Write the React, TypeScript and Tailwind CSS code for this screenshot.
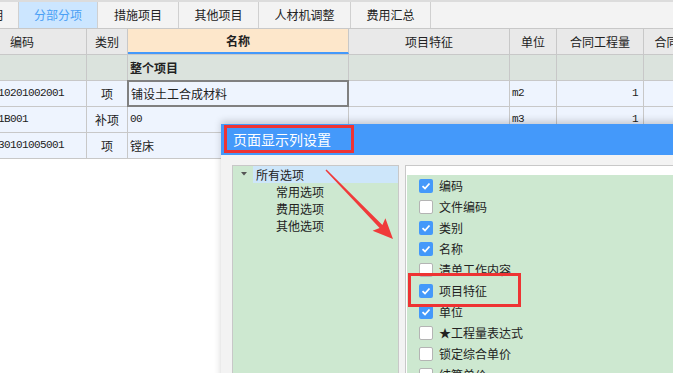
import React from "react";

const tabs = [
  { label: "编制说明", w: "w-[19px]", clip: true },
  { label: "分部分项", w: "w-[79px]", active: true },
  { label: "措施项目", w: "w-[81px]" },
  { label: "其他项目", w: "w-[80px]" },
  { label: "人材机调整", w: "w-[92px]" },
  { label: "费用汇总", w: "w-[80px]" },
];

const cols = [
  { key: "code", title: "编码", w: "w-[129px] ml-[-42px]" },
  { key: "type", title: "类别", w: "w-[41px]" },
  { key: "name", title: "名称", w: "w-[221px]" },
  { key: "feat", title: "项目特征", w: "w-[161px]" },
  { key: "unit", title: "单位", w: "w-[47px]" },
  { key: "qty", title: "合同工程量", w: "w-[87px]" },
  { key: "price", title: "合同综合单价", w: "w-[94px]" },
];

const rows = [
  { code: "010201002001", type: "项", name: "铺设土工合成材料", unit: "m2", qty: "1", selected: true },
  { code: "01B001", type: "补项", name: "00", unit: "m3", qty: "1" },
  { code: "030101005001", type: "项", name: "镗床", unit: "台", qty: "1" },
];

const options = [
  { label: "编码", on: true },
  { label: "文件编码", on: false },
  { label: "类别", on: true },
  { label: "名称", on: true },
  { label: "清单工作内容", on: false },
  { label: "项目特征", on: true },
  { label: "单位", on: true },
  { label: "★工程量表达式", on: false },
  { label: "锁定综合单价", on: false },
  { label: "结算单价", on: false },
];

const mono = "font-['Liberation_Mono',monospace] text-[11px] tracking-[-0.6px]";

function Box({ on }: { on: boolean }) {
  if (!on) return <div className="w-[14px] h-[14px] shrink-0 rounded-[2px] border border-[#b4b4b4] bg-white" />;
  return (
    <div className="w-[14px] h-[14px] shrink-0 rounded-[2px] bg-[#4499fa] flex items-center justify-center">
      <svg width="10" height="10" viewBox="0 0 10 10">
        <polyline points="1.5,5.2 4,7.5 8.5,2.5" fill="none" stroke="white" strokeWidth="1.8" />
      </svg>
    </div>
  );
}

export default function App() {
  return (
    <div className="relative w-[673px] h-[373px] overflow-hidden bg-white text-[12px] text-[#222] font-['Noto_Sans_CJK_SC','Noto_Sans',sans-serif] leading-none">
      {/* tabs */}
      <div className="h-[29px] flex bg-[#f3f3f3] border-t-2 border-t-[#dcdcdc] border-b border-b-[#c8c8c8]">
        {tabs.map((t) => (
          <div
            key={t.label}
            className={`${t.w} shrink-0 h-full border-r border-[#d0d0d0] flex items-center overflow-hidden ${
              t.clip ? "justify-end" : "justify-center"
            } ${t.active ? "bg-[#cce6ff] text-[#4a9ff5]" : ""}`}
          >
            <span className={t.clip ? "mr-[15px] whitespace-nowrap" : "whitespace-nowrap"}>{t.label}</span>
          </div>
        ))}
      </div>

      {/* header */}
      <div className="flex h-[26px] bg-[#e9e9e9] border-b border-[#c8c8c8]">
        {cols.map((c) => (
          <div
            key={c.key}
            className={`${c.w} shrink-0 h-full border-r border-[#c8c8c8] flex items-center justify-center whitespace-nowrap ${
              c.key === "name" ? "bg-[#fde7cb] font-bold border-b-2 border-b-[#4499fa]" : ""
            }`}
          >
            {c.title}
          </div>
        ))}
      </div>

      {/* whole project row */}
      <div className="flex h-[26px] bg-[#dbe3dd] border-b border-[#c8c8c8]">
        {cols.map((c) => (
          <div key={c.key} className={`${c.w} shrink-0 h-full border-r border-[#c8c8c8] flex items-center pl-[2px] font-bold`}>
            {c.key === "name" ? "整个项目" : ""}
          </div>
        ))}
      </div>

      {rows.map((r) => (
        <div key={r.code} className="flex h-[26px] bg-[#eef4fe] border-b border-[#c8c8c8]">
          <div className="w-[129px] ml-[-42px] shrink-0 border-r border-[#c8c8c8] flex items-center pl-[34px]">
            <span className={mono}>{r.code}</span>
          </div>
          <div className="w-[41px] shrink-0 border-r border-[#c8c8c8] flex items-center justify-center">{r.type}</div>
          <div
            className={`w-[221px] shrink-0 flex items-center pl-[2px] ${
              r.selected ? "border-2 border-[#808080] mt-[-1px] h-[27px] ml-[-1px] w-[222px]" : "border-r border-[#c8c8c8]"
            }`}
          >
            {r.name === "00" ? <span className={mono}>00</span> : r.name}
          </div>
          <div className="w-[161px] shrink-0 border-r border-[#c8c8c8]" />
          <div className="w-[47px] shrink-0 border-r border-[#c8c8c8] flex items-center pl-[2px]">
            <span className={mono}>{r.unit}</span>
          </div>
          <div className="w-[87px] shrink-0 border-r border-[#c8c8c8] flex items-center justify-end pr-[5px]">
            <span className={mono}>{r.qty}</span>
          </div>
          <div className="w-[94px] shrink-0 border-r border-[#c8c8c8]" />
        </div>
      ))}

      {/* dialog */}
      <div className="absolute left-[221px] top-[124px] w-[470px] h-[260px] bg-[#f3f3f3] shadow-[0_-3px_7px_rgba(0,0,0,0.18)]">
        <div className="h-[31px] bg-[#4499fa] pt-px pl-[3px]">
          <div className="w-[130px] h-[28px] border-[3px] border-[#ee3333] flex items-center pl-[6px] text-[14px] text-white whitespace-nowrap">
            页面显示列设置
          </div>
        </div>
        <div className="flex pt-[10px] pl-[11px] gap-[6px] h-[229px]">
          <div className="w-[167px] h-[240px] border border-[#c8c8c8] bg-[#cde8d0]">
            <div className="flex items-center h-[17px]">
              <svg width="20" height="17" viewBox="0 0 20 17" className="shrink-0">
                <polygon points="8,6 14,6 11,9.5" fill="#555" />
              </svg>
              <div className="flex-1 h-full bg-[#cde6fa] flex items-center pl-[3px]">所有选项</div>
            </div>
            {["常用选项", "费用选项", "其他选项"].map((s) => (
              <div key={s} className="h-[17px] flex items-center pl-[43px]">
                {s}
              </div>
            ))}
          </div>
          <div className="flex-1 h-[240px] border border-[#c8c8c8] bg-white pt-[9px] pl-px">
            <div className="bg-[#cde8d0] h-full">
              {options.map((o) => (
                <div key={o.label} className="h-[21px] flex items-center pl-[12px] gap-[6px] whitespace-nowrap">
                  <Box on={o.on} />
                  <span>{o.label}</span>
                </div>
              ))}
            </div>
          </div>
        </div>
      </div>

      {/* highlight on 项目特征 */}
      <div className="absolute left-[408px] top-[273px] w-[113px] h-[34px] border-[3px] border-[#ee3333]" />

      {/* arrow */}
      <svg className="absolute left-0 top-0 pointer-events-none" width="673" height="373">
        <polygon
          points="326.5,169.5 382.4,225.1 385.4,218.2 393,239 372.6,230.8 379.6,227.9 325.5,170.5"
          fill="#f03a3a"
        />
      </svg>
    </div>
  );
}
